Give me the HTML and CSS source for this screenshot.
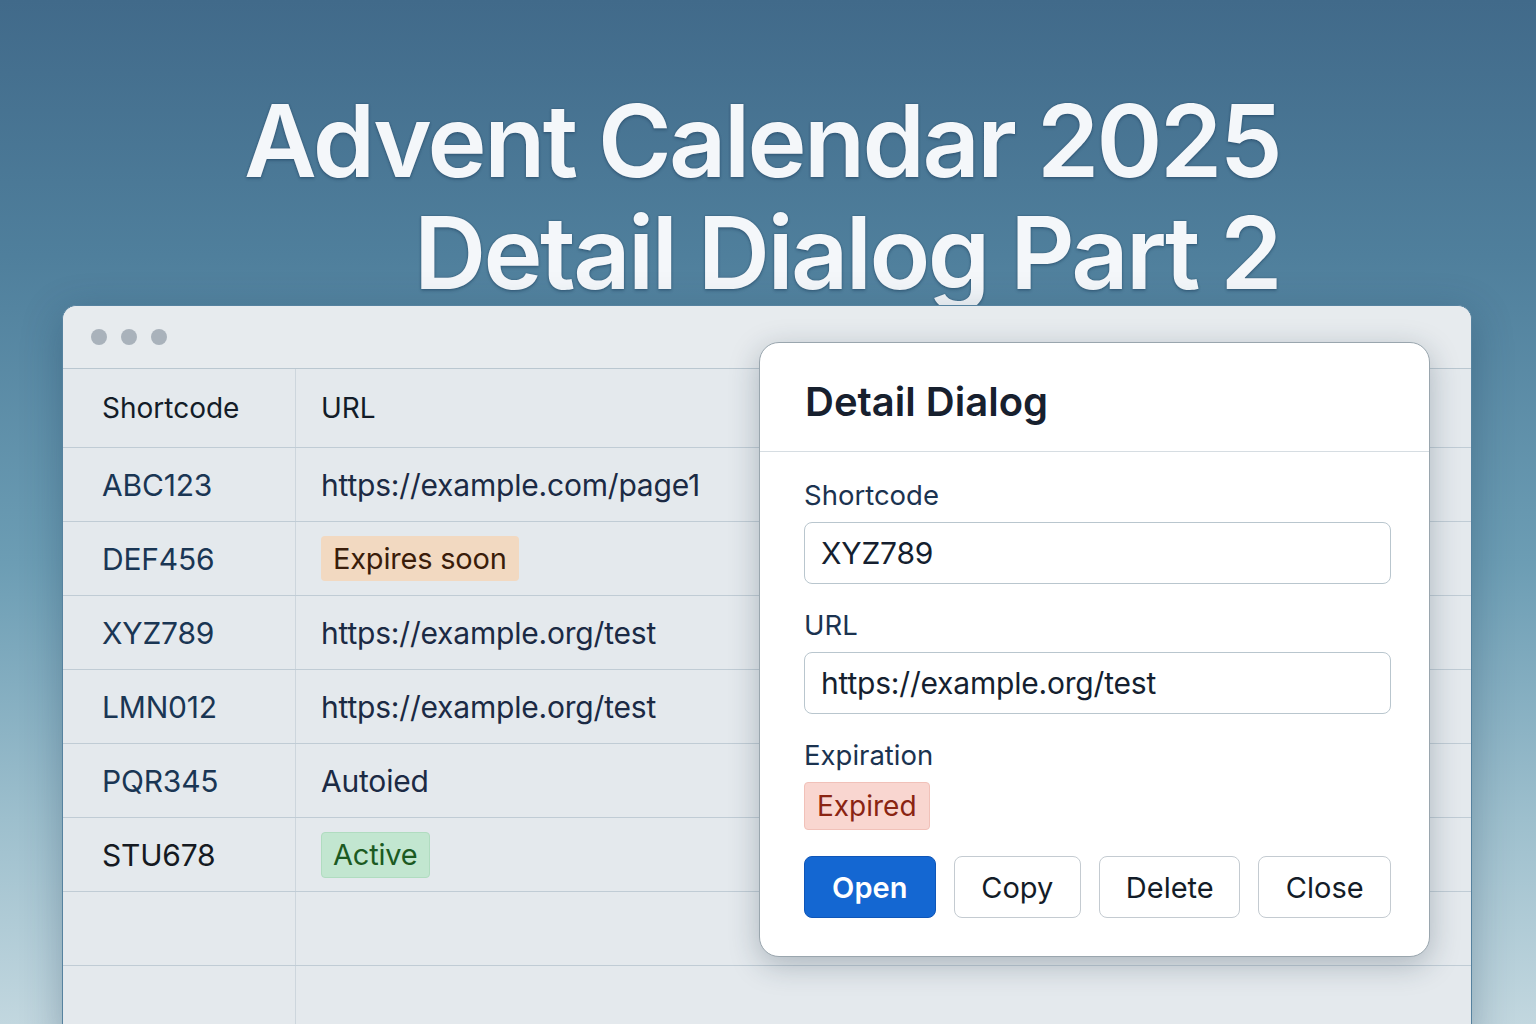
FILE: index.html
```html
<!DOCTYPE html>
<html>
<head>
<meta charset="utf-8">
<link rel="stylesheet" href="styles.css">
</head>
<body>
<div class="page">
  <h1 class="hero">
    <span class="hero-line">Advent Calendar 2025</span>
    <span class="hero-line">Detail Dialog Part 2</span>
  </h1>
  <div class="window">
    <div class="titlebar">
      <span class="dot"></span><span class="dot"></span><span class="dot"></span>
    </div>
    <div class="table">
      <div class="row head"><div class="c1">Shortcode</div><div class="c2">URL</div></div>
      <div class="row"><div class="c1">ABC123</div><div class="c2">https://example.com/page1</div></div>
      <div class="row"><div class="c1">DEF456</div><div class="c2"><span class="tag tag-warn">Expires soon</span></div></div>
      <div class="row"><div class="c1">XYZ789</div><div class="c2">https://example.org/test</div></div>
      <div class="row"><div class="c1">LMN012</div><div class="c2">https://example.org/test</div></div>
      <div class="row"><div class="c1">PQR345</div><div class="c2">Autoied</div></div>
      <div class="row"><div class="c1 dark">STU678</div><div class="c2"><span class="tag tag-ok">Active</span></div></div>
      <div class="row"><div class="c1"></div><div class="c2"></div></div>
      <div class="row"><div class="c1"></div><div class="c2"></div></div>
    </div>
    <div class="dialog">
      <div class="dialog-head">Detail Dialog</div>
      <div class="dialog-body">
        <label class="lbl">Shortcode</label>
        <div class="input">XYZ789</div>
        <label class="lbl">URL</label>
        <div class="input">https://example.org/test</div>
        <label class="lbl">Expiration</label>
        <div><span class="tag tag-bad">Expired</span></div>
        <div class="actions">
          <button class="btn primary">Open</button>
          <button class="btn">Copy</button>
          <button class="btn">Delete</button>
          <button class="btn">Close</button>
        </div>
      </div>
    </div>
  </div>
</div>
</body>
</html>
```

FILE: styles.css
```css
* { box-sizing: border-box; }
html, body { margin: 0; padding: 0; }
body {
  width: 1536px;
  height: 1024px;
  overflow: hidden;
  font-family: Inter, "Noto Sans", "Liberation Sans", sans-serif;
  background: linear-gradient(180deg, #416a8a 0%, #4f7f9c 25%, #6c9db4 55%, #9dbfcd 80%, #c2d7df 100%);
}
.page { position: relative; width: 1536px; height: 1024px; }
.hero {
  margin: 0;
  padding: 85px 256px 0 0;
  height: 305px;
  display: flex;
  flex-direction: column;
  align-items: flex-end;
  color: #f4f7fa;
  font-weight: 600;
  font-size: 100px;
  line-height: 112px;
  letter-spacing: -2.6px;
  text-shadow: 0 0 2px rgba(20, 50, 80, 0.5), 0 2px 3px rgba(20, 50, 80, 0.3);
}
.hero-line { display: block; white-space: nowrap; }
.window {
  position: relative;
  margin-left: 62px;
  width: 1410px;
  height: 740px;
  background: #e4e9ed;
  border-radius: 14px 14px 0 0;
  border: 1px solid #56829f;
  box-shadow: 0 10px 40px rgba(20, 50, 80, 0.3);
}
.titlebar {
  height: 63px;
  display: flex;
  align-items: center;
  gap: 14px;
  padding-left: 28px;
  background: #e7ebee;
  border-radius: 14px 14px 0 0;
  border-bottom: 1px solid #bac7d0;
}
.dot { width: 16px; height: 16px; border-radius: 50%; background: #a9b2bb; }
.table { display: flex; flex-direction: column; }
.row {
  display: grid;
  grid-template-columns: 233px 1fr;
  height: 74px;
  border-bottom: 1px solid #c0ccd5;
  font-size: 30px;
  letter-spacing: -0.2px;
  color: #1b2a44;
}
.row.head { height: 79px; font-size: 28px; letter-spacing: 0; }
.c1, .c2 { display: flex; align-items: center; }
.c1 { padding-left: 39px; border-right: 1px solid #cdd6dd; color: #1a3654; }
.head .c1, .head .c2 { color: #131c28; }
.c1.dark { color: #151a22; }
.c2 { padding-left: 25px; }
.tag {
  display: inline-flex;
  align-items: center;
  border-radius: 4px;
  padding: 0 12px;
  height: 45px;
  font-size: 29px;
}
.tag-warn { background: #f2d9c1; color: #3a1d0a; }
.tag-ok { background: #c2e6d0; color: #1c5a22; border: 1px solid #b0dcc0; padding: 0 11px; height: 46px; }
.tag-bad { background: #f9d6d0; color: #8a2412; border: 1px solid #f1c1b9; height: 48px; padding: 0 12px; font-size: 28px; }
.dialog {
  position: absolute;
  left: 696px;
  top: 36px;
  width: 671px;
  height: 615px;
  background: #ffffff;
  border-radius: 20px;
  border: 1px solid #9aa6ae;
  box-shadow: 0 8px 30px rgba(30, 50, 70, 0.28);
}
.dialog-head {
  height: 109px;
  padding: 34px 0 0 45px;
  font-size: 40px;
  font-weight: 600;
  color: #17202e;
  border-bottom: 1px solid #d6dde2;
}
.dialog-body { padding: 27px 38px 0 44px; display: flex; flex-direction: column; }
.lbl { font-size: 27.5px; color: #1b3350; line-height: 32px; margin-bottom: 11px; }
.input {
  height: 62px;
  border: 1px solid #b9c6ce;
  border-radius: 8px;
  padding-left: 16px;
  display: flex;
  align-items: center;
  font-size: 30px;
  letter-spacing: -0.2px;
  color: #151f30;
  margin-bottom: 25px;
}
.actions { display: flex; gap: 18px; margin-top: 26px; }
.btn {
  height: 62px;
  border: 1px solid #c4cbd1;
  border-radius: 8px;
  background: #ffffff;
  font-family: inherit;
  font-size: 29px;
  color: #131c28;
  padding: 0;
}
.btn:nth-child(2) { width: 128px; }
.btn:nth-child(3) { width: 142px; }
.btn:nth-child(4) { width: 133px; }
.btn.primary {
  width: 132px;
  background: #1467d2;
  border-color: #0f56b8;
  color: #ffffff;
  font-weight: 600;
}
```
